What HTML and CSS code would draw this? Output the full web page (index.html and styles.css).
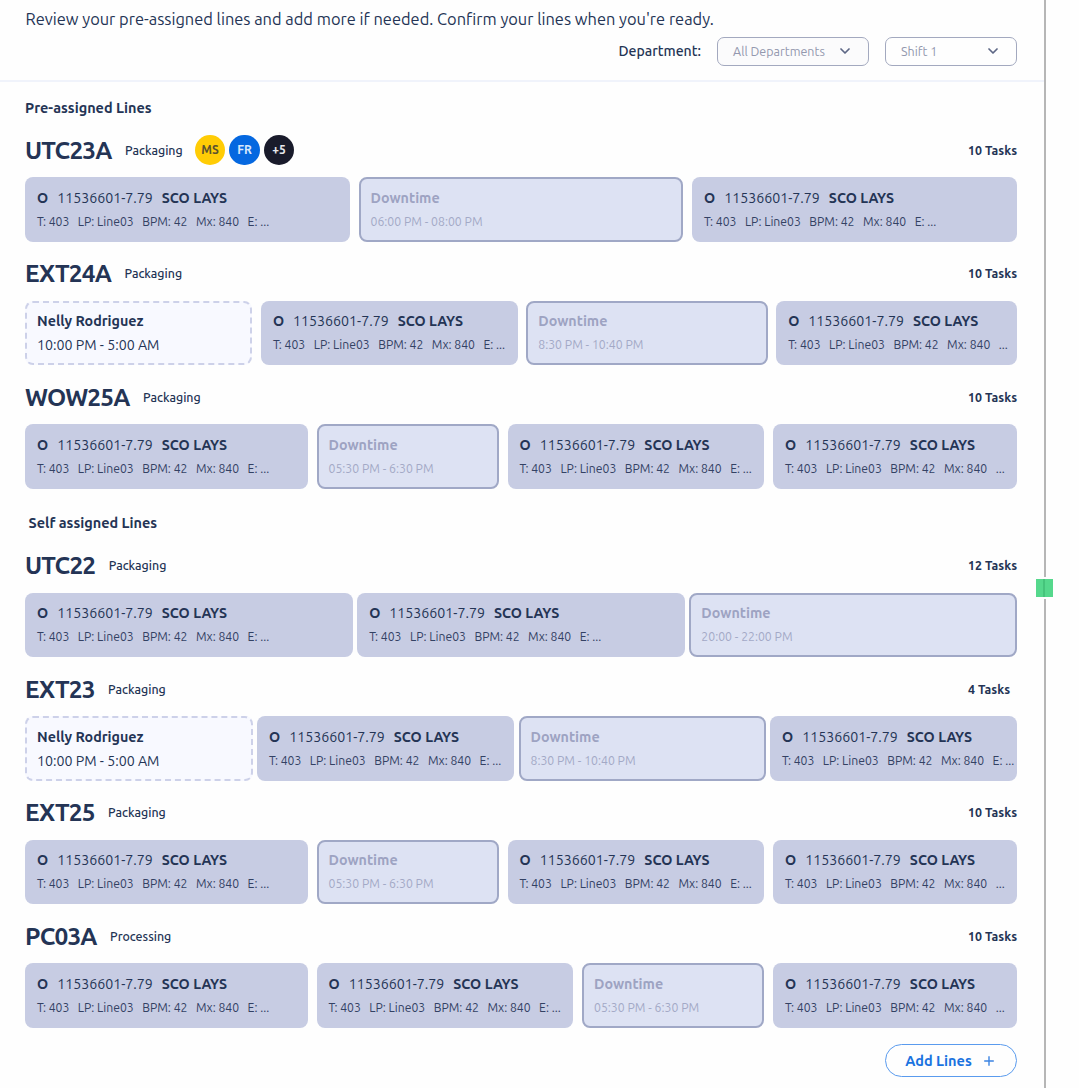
FILE: index.html
```
<!DOCTYPE html>
<html lang="en">
<head>
<meta charset="utf-8">
<title>Assigned Lines</title>
<link rel="stylesheet" href="styles.css">
</head>
<body>
<main class="panel">
  <header class="top">
    <p class="intro">Review your pre-assigned lines and add more if needed. Confirm your lines when you're ready.</p>
    <div class="filters">
      <span class="filter-label">Department:</span>
      <button class="select select-dept">All Departments <svg class="chev" viewBox="0 0 10 6"><path d="M1 1l4 4 4-4"/></svg></button>
      <button class="select select-shift">Shift 1 <svg class="chev" viewBox="0 0 10 6"><path d="M1 1l4 4 4-4"/></svg></button>
    </div>
  </header>
  <div class="content" id="content"></div>
  <button class="add">Add Lines <svg class="plus" viewBox="0 0 10 10"><path d="M5 .2v9.6M.2 5h9.6"/></svg></button>
  <span class="handle"></span>
</main>
<script src="lines.js"></script>
</body>
</html>
```
FILE: styles.css
```
* { box-sizing: border-box; }
body {
  margin: 0;
  background: #fefefe;
  color: #243455;
  font-family: Ubuntu, "Noto Sans", sans-serif;
  font-size: 14.2px;
  line-height: 1;
}
button { font: inherit; background: none; }
.panel {
  position: relative;
  width: 1046px;
  height: 1088px;
  border-right: 2px solid #b6b6b6;
  overflow: visible;
}
.top {
  height: 82px;
  padding: 8px 27px 0 25.5px;
  border-bottom: 2px solid #f0f3fb;
}
.intro { margin: 0; font-size: 16.42px; line-height: 22px; white-space: nowrap; }
.filters { display: flex; align-items: center; justify-content: flex-end; margin-top: 7px; }
.filter-label { font-size: 14.1px; font-weight: 500; margin-right: 16px; }
.select {
  display: flex;
  align-items: center;
  justify-content: space-between;
  height: 28.5px;
  padding: 0 18px 0 15px;
  border: 1.5px solid #a3a9bf;
  border-radius: 7px;
  color: #9398ae;
  font-size: 12.5px;
}
.select-dept { width: 152px; background: #fbfbfc; }
.select-shift { width: 132px; margin-left: 16px; }
.chev { width: 10px; height: 6px; fill: none; stroke: #5d6785; stroke-width: 1.7; stroke-linecap: round; stroke-linejoin: round; }

.content { padding: 17px 27px 0 25px; }
.section-title { margin: 0; height: 18px; line-height: 19px; font-size: 14.45px; font-weight: 700; }
.section + .section .section-title { padding-left: 3.5px; }
.section + .section { margin-top: 9.6px; }
.lines { padding-top: 17px; }
.line { height: 123.6px; }
.line-head { display: flex; align-items: center; height: 32px; }
.code { margin: 0; font-size: 24.4px; font-weight: 700; letter-spacing: -0.8px; }
.dept { margin-left: 13.4px; font-size: 12.4px; font-weight: 500; }
.avatars { display: flex; gap: 4px; margin-left: 12px; }
.avatar {
  display: grid; place-items: center;
  width: 30.5px; height: 30.5px;
  border-radius: 50%;
  font-size: 12px; font-weight: 700;
}
.yellow { background: #ffcc05; color: #5a5230; }
.blue { background: #0568e0; color: #d8e8fc; }
.dark { background: #191b2b; color: #e8e9ee; }
.count { margin-left: auto; font-size: 12.4px; font-weight: 700; }
.count.inset { margin-right: 7px; }
.cards { display: grid; margin-top: 11.2px; gap: 8.6px; }
.cards.tight { gap: 4.5px; }
.card {
  height: 64.4px;
  padding: 12px 0 0 12px;
  border-radius: 8px;
  background: #c7cce3;
  white-space: nowrap;
  min-width: 0;
}
.row { display: flex; height: 17px; align-items: center; }
.row + .row { margin-top: 7px; }
.task .row:first-child { gap: 9px; }
.task .row:last-child { gap: 8.5px; font-size: 12.2px; color: #334163; }
.task b { font-weight: 700; }
.down { padding: 10px 0 0 10px; background: #dde2f3; border: 2px solid #a0a8c6; color: #9da3c2; }
.down .row:last-child { font-size: 12.25px; color: #a3a9c6; }
.down b, .person b { font-size: 14.3px; }
.person { padding: 10px 0 0 10px; background: #f8f9ff; border: 2px dashed #cdd1e9; }
.add {
  display: flex; align-items: center; justify-content: center; gap: 12px;
  width: 132px; height: 33px;
  margin: .5px 27px 0 auto;
  padding: 1px 9px 0 6px;
  border: 1.5px solid #5a9bee;
  border-radius: 17px;
  color: #1a73e0;
  font-size: 14.5px; font-weight: 700;
}
.plus { width: 10px; height: 10px; fill: none; stroke: #3c84e2; stroke-width: 1.4; }
.handle {
  position: absolute;
  right: -11px; top: 577px;
  width: 21px; height: 22px;
  border: 2.5px solid #fefefe;
  background: linear-gradient(90deg, #55d88c 0 7px, #45c47b 7px 9px, #55d88c 9px);
}
```
FILE: lines.js
```
const task = (full = true) => ({ type: 'task', full });
const down = time => ({ type: 'down', time });
const person = { type: 'person' };

const sections = [
  { title: 'Pre-assigned Lines', lines: [
    { code: 'UTC23A', dept: 'Packaging', tasks: 10, cols: [325, 325, 325], avatars: true,
      cards: [task(), down('06:00 PM - 08:00 PM'), task()] },
    { code: 'EXT24A', dept: 'Packaging', tasks: 10, cols: [227.5, 257, 241.5, 241],
      cards: [person, task(), down('8:30 PM - 10:40 PM'), task(false)] },
    { code: 'WOW25A', dept: 'Packaging', tasks: 10, cols: [283, 182.5, 257, 244],
      cards: [task(), down('05:30 PM - 6:30 PM'), task(), task(false)] }
  ] },
  { title: 'Self assigned Lines', lines: [
    { code: 'UTC22', dept: 'Packaging', tasks: 12, cols: [328, 328, 328], tight: true,
      cards: [task(), task(), down('20:00 - 22:00 PM')] },
    { code: 'EXT23', dept: 'Packaging', tasks: 4, cols: [227.5, 257, 247, 247], tight: true,
      cards: [person, task(), down('8:30 PM - 10:40 PM'), task()] },
    { code: 'EXT25', dept: 'Packaging', tasks: 10, cols: [283, 182.5, 257, 244],
      cards: [task(), down('05:30 PM - 6:30 PM'), task(), task(false)] },
    { code: 'PC03A', dept: 'Processing', tasks: 10, cols: [283, 257, 182.5, 244],
      cards: [task(), task(), down('05:30 PM - 6:30 PM'), task(false)] }
  ] }
];

const row = html => `<div class="row">${html}</div>`;

function card(c) {
  if (c.type === 'down') return `<div class="card down">${row('<b>Downtime</b>')}${row(c.time)}</div>`;
  if (c.type === 'person') return `<div class="card person">${row('<b>Nelly Rodriguez</b>')}${row('10:00 PM - 5:00 AM')}</div>`;
  const meta = ['T: 403', 'LP: Line03', 'BPM: 42', 'Mx: 840', c.full ? 'E: ...' : '...'];
  return `<div class="card task">${row('<b>O</b><span>11536601-7.79</span><b>SCO LAYS</b>')}${row(meta.map(m => `<span>${m}</span>`).join(''))}</div>`;
}

const avatars = `<div class="avatars"><span class="avatar yellow">MS</span><span class="avatar blue">FR</span><span class="avatar dark">+5</span></div>`;

document.getElementById('content').innerHTML = sections.map(s => `
  <section class="section">
    <h2 class="section-title">${s.title}</h2>
    <div class="lines">${s.lines.map(l => `
      <div class="line">
        <div class="line-head">
          <h3 class="code">${l.code}</h3><span class="dept">${l.dept}</span>${l.avatars ? avatars : ''}
          <span class="count${l.tasks < 10 ? ' inset' : ''}">${l.tasks} Tasks</span>
        </div>
        <div class="cards${l.tight ? ' tight' : ''}" style="grid-template-columns:${l.cols.map(c => c + 'fr').join(' ')}">${l.cards.map(card).join('')}</div>
      </div>`).join('')}
    </div>
  </section>`).join('');
```
